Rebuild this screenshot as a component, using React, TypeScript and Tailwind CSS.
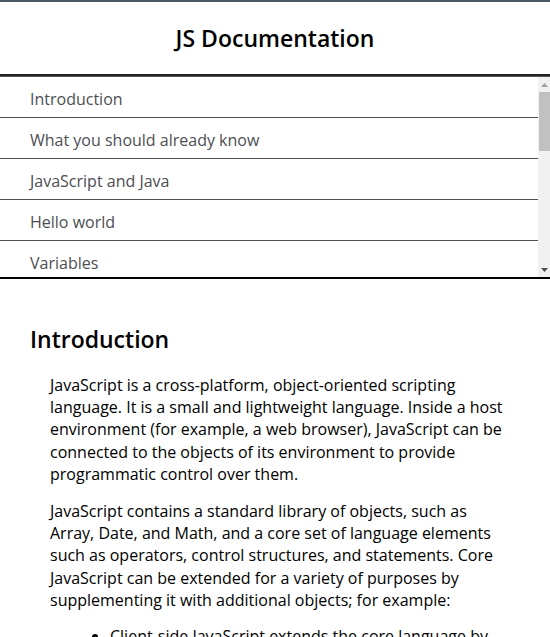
import React from "react";

const NAV_ITEMS = [
  "Introduction",
  "What you should already know",
  "JavaScript and Java",
  "Hello world",
  "Variables",
  "Declaring variables",
  "Variable scope",
  "Global variables",
  "Constants",
  "Data types",
  "if...else statement",
  "while statement",
  "Function declarations",
  "Reference",
];

// classic scrollbar look, drawn by hand since the headless browser overlays its own
function FakeScrollbar() {
  return (
    <div className="w-[12px] h-full bg-[#f1f1f1] flex flex-col">
      <div className="h-[15px] flex items-center justify-center">
        <svg width="7" height="4" viewBox="0 0 7 4">
          <polygon points="3.5,0 7,4 0,4" fill="#a3a3a3" />
        </svg>
      </div>
      <div className="h-[59px] ml-[1px] bg-[#c1c1c1]" />
      <div className="flex-1" />
      <div className="h-[15px] flex items-center justify-center">
        <svg width="7" height="4" viewBox="0 0 7 4">
          <polygon points="0,0 7,0 3.5,4" fill="#505050" />
        </svg>
      </div>
    </div>
  );
}

export default function App() {
  return (
    <div
      className="min-h-screen bg-white text-black border-t-2 border-[#4f5b62]"
      style={{ fontFamily: '"Open Sans", sans-serif' }}
    >
      <nav id="navbar" className="border-b-2 border-black">
        <header className="h-[74px] flex items-center justify-center border-b-2 border-[#222]">
          <h1 className="text-[23px] font-semibold leading-none">JS Documentation</h1>
        </header>
        <div className="h-[201px] flex border-t border-[#555]">
          <ul className="flex-1 overflow-hidden">
            {NAV_ITEMS.map((item) => (
              <li key={item} className="border-b border-[#4d4e53]">
                <a
                  href={"#" + item.replace(/ /g, "_")}
                  className="block px-[30px] pt-[12px] pb-[8px] text-[16px] leading-[20px] text-[#4d4e53]"
                >
                  {item}
                </a>
              </li>
            ))}
          </ul>
          <FakeScrollbar />
        </div>
      </nav>

      <main id="main-doc" className="px-[30px] pt-[42px]">
        <section className="main-section" id="Introduction">
          <header className="text-[23px] font-semibold leading-[36px]">Introduction</header>
          <article className="mt-[17px] pl-[20px] text-[16px] leading-[22.2px]">
            <p>
              JavaScript is a cross-platform, object-oriented scripting
              <br />
              language. It is a small and lightweight language. Inside a host
              <br />
              environment (for example, a web browser), JavaScript can be
              <br />
              connected to the objects of its environment to provide
              <br />
              programmatic control over them.
            </p>
            <p className="mt-[15px]">
              JavaScript contains a standard library of objects, such as
              <br />
              Array, Date, and Math, and a core set of language elements
              <br />
              such as operators, control structures, and statements. Core
              <br />
              JavaScript can be extended for a variety of purposes by
              <br />
              supplementing it with additional objects; for example:
            </p>
            <ul className="mt-[14px] list-disc pl-[40px]">
              <li className="ml-[20px]">
                Client-side JavaScript extends the core language by
                <br />
                supplying objects to control a browser and its Document
                <br />
                Object Model (DOM).
              </li>
            </ul>
          </article>
        </section>
      </main>
    </div>
  );
}
